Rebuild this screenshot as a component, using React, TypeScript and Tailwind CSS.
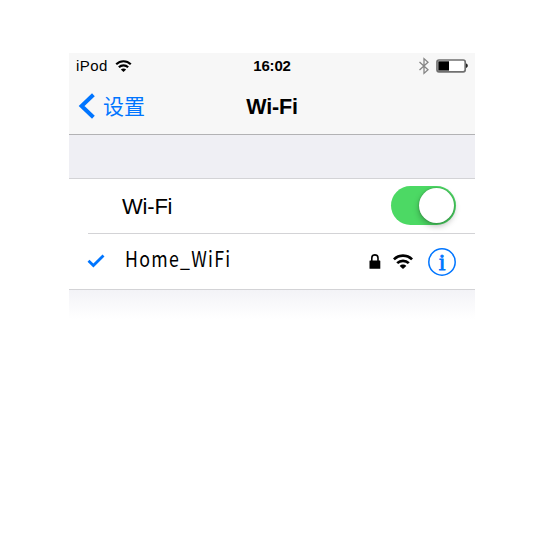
import type { ReactNode } from "react";

function WifiIcon({ className }: { className: string }) {
  return (
    <svg viewBox="0 0 20 15" className={className} fill="none" stroke="#000" strokeWidth="2.7">
      <path d="M.9 5.4C6 .3 14 .3 19.1 5.4" />
      <path d="M4.2 9.1c3.2-3.1 8.4-3.1 11.6 0" />
      <path d="M6.7 12c1.8-1.9 4.8-1.9 6.6 0L10 15z" fill="#000" stroke="none" />
    </svg>
  );
}

function BluetoothIcon() {
  return (
    <svg viewBox="0 0 12 18" className="h-[18px] w-3" fill="none" stroke="#858585" strokeWidth="1.3">
      <path d="M1.5 5L10 12.8 6 16.4V1.6L10 5.2 1.5 13" />
    </svg>
  );
}

function BatteryIcon() {
  return (
    <svg viewBox="0 0 32 14" className="h-3.5 w-8">
      <rect x="1" y="1" width="28.2" height="11.8" rx="2" fill="#fff" stroke="#707070" strokeWidth="1.7" />
      <path d="M2.3 2.3H13v9.3H2.3z" fill="#000" />
      <path d="M30 4.6c2.4.6 2.4 3.8 0 4.4z" fill="#222" />
    </svg>
  );
}

function LockIcon() {
  return (
    <svg viewBox="0 0 12 15" className="h-[15px] w-3">
      <path d="M2.8 8V4a3.1 3.1 0 0 1 6.2 0v4" fill="none" stroke="#000" strokeWidth="1.6" />
      <rect x=".5" y="6.5" width="10.8" height="8.3" rx=".4" fill="#000" />
    </svg>
  );
}

function InfoBadge() {
  return (
    <span className="relative ml-[15px] flex size-7 items-center justify-center font-['Liberation_Serif',serif] text-[24px] leading-none text-[#0075ff] [-webkit-text-stroke:0.8px_#0075ff]">
      <svg viewBox="0 0 28 28" className="absolute inset-0 size-7" fill="none" stroke="currentColor" strokeWidth="1.5">
        <circle cx="14" cy="14" r="13.2" />
      </svg>
      i
    </span>
  );
}

function StatusBar() {
  return (
    <div className="grid h-[25px] grid-cols-3 items-center px-[7px] text-[15px] leading-none">
      <div className="flex items-center gap-[7px]">
        <span className="tracking-[0.4px]">iPod</span>
        <WifiIcon className="h-3 w-[17px]" />
      </div>
      <span className="text-center font-bold tracking-[-0.2px]">16:02</span>
      <div className="flex items-center justify-end gap-[6px]">
        <BluetoothIcon />
        <BatteryIcon />
      </div>
    </div>
  );
}

function NavBar() {
  return (
    <div className="grid h-14 grid-cols-3 items-center pl-[9px]">
      <div className="flex items-center gap-[7px] text-[#0075ff]">
        <svg viewBox="0 0 18 26" className="h-[26px] w-[18px]" fill="none" stroke="currentColor" strokeWidth="4">
          <path d="M15.4 1.8L3.6 13l11.8 11.2" />
        </svg>
        <span className="pb-px font-['Noto_Sans_CJK_SC',sans-serif] text-[21px] leading-none">设置</span>
      </div>
      <h1 className="pt-[3px] pr-[9px] text-center text-[21.5px] leading-none font-bold tracking-[-0.2px]">Wi-Fi</h1>
    </div>
  );
}

function Toggle() {
  return (
    <div className="flex h-[39px] w-[65px] items-center justify-end rounded-full bg-[#4cd964] pr-[2px]">
      <div className="size-[35px] rounded-full bg-white shadow-[0_3px_6px_rgba(0,0,0,0.28),0_0_2px_rgba(0,0,0,0.3)]" />
    </div>
  );
}

function Row({ children }: { children: ReactNode }) {
  return <div className="flex items-center justify-between pr-[19px]">{children}</div>;
}

export default function App() {
  return (
    <main className="h-[543px] w-[547px] bg-white pt-[53px] pl-[69px] font-['Liberation_Sans',Arial,sans-serif] text-black">
      <section className="w-[406px]">
        <header className="h-[82px] border-b border-[#b2b2b4] bg-[#f7f7f7]">
          <StatusBar />
          <NavBar />
        </header>
        <div className="h-11 border-b border-[#d3d3d6] bg-[#efeff4]" />
        <div className="bg-white">
          <Row>
            <span className="pt-0.5 pl-[53px] text-[22px] leading-none tracking-[-0.2px]">Wi-Fi</span>
            <div className="flex h-[54px] items-center pb-[2px]">
              <Toggle />
            </div>
          </Row>
          <div className="ml-[19px] h-px bg-[#d3d3d6]" />
          <Row>
            <div className="flex h-[55px] items-center pb-px pl-[18px]">
              <svg viewBox="0 0 18 14" className="h-3.5 w-[18px]" fill="none" stroke="#0075ff" strokeWidth="2.8">
                <path d="M1.5 6.8l4.9 4.7L16.5 1.5" />
              </svg>
              <span className="ml-5 origin-left scale-x-[0.845] pb-[5px] font-['Noto_Sans_CJK_SC',sans-serif] text-[21px] leading-none tracking-[1.5px]">
                Home_WiFi
              </span>
            </div>
            <div className="flex items-center">
              <LockIcon />
              <WifiIcon className="ml-3 h-[15px] w-5" />
              <InfoBadge />
            </div>
          </Row>
        </div>
        <div className="h-[30px] border-t border-[#d3d3d6] bg-linear-to-b from-[#f3f3f7] to-white" />
      </section>
    </main>
  );
}
